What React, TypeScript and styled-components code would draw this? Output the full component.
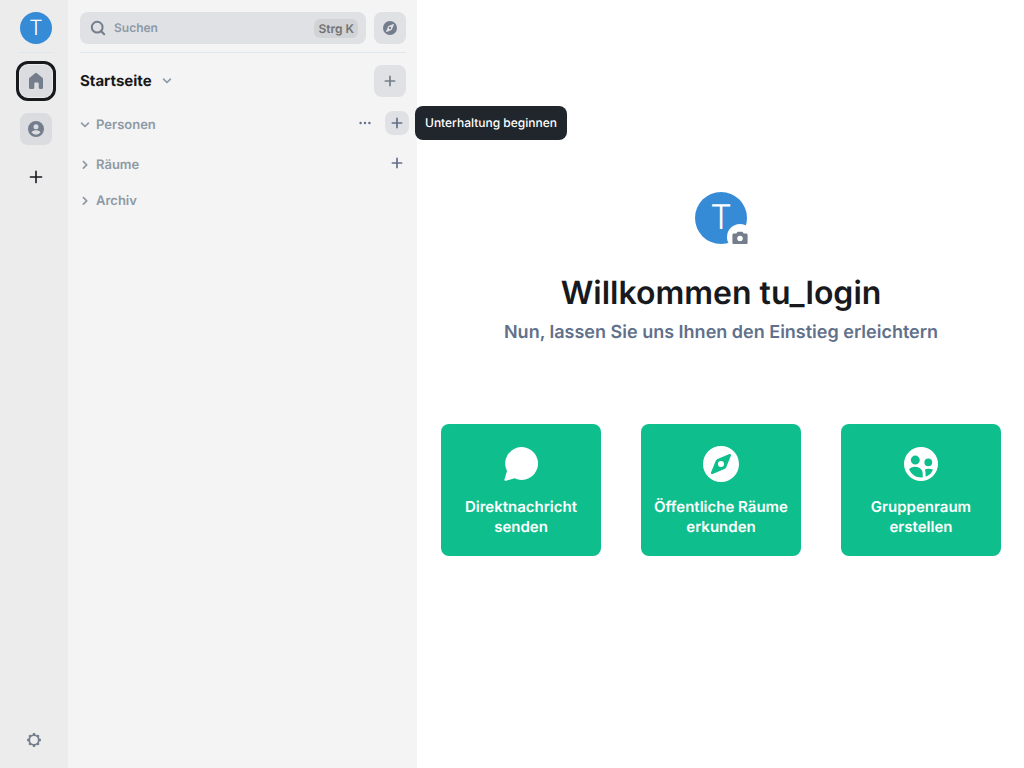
import React from "react";
import styled, { createGlobalStyle, css } from "styled-components";

const GlobalStyle = createGlobalStyle`
  *, *::before, *::after { box-sizing: border-box; }
  body {
    margin: 0;
    background: #ffffff;
    color: #17191c;
    font-family: Inter, "Liberation Sans", sans-serif;
    text-rendering: geometricPrecision;
  }
  button, input { font: inherit; text-rendering: inherit; }
  button { border: 0; padding: 0; background: none; color: inherit; cursor: pointer; }
  svg { display: block; flex: none; }
  h1, h2, h3 { margin: 0; }
`;

const Layout = styled.div`
  display: flex;
  min-height: 100vh;
`;

const Rail = styled.nav`
  display: flex;
  flex: none;
  flex-direction: column;
  align-items: center;
  width: 68px;
  padding: 12px 14px 18px 18px;
  background: #ececec;
`;

const Avatar = styled.span<{ $large?: boolean }>`
  display: flex;
  flex: none;
  align-items: center;
  justify-content: center;
  width: ${(p) => (p.$large ? 52 : 32)}px;
  height: ${(p) => (p.$large ? 52 : 32)}px;
  border-radius: 50%;
  background: #368bd6;
  color: #ffffff;
  font-size: ${(p) => (p.$large ? 34 : 21)}px;
  font-weight: 350;
  line-height: 1;
`;

const UserButton = styled.button`
  border-radius: 50%;
`;

const Divider = styled.hr`
  align-self: stretch;
  flex: none;
  height: 1px;
  margin: 8px 0 12px;
  border: 0;
  background: #e1e7f1;
`;

const Spaces = styled.div`
  display: flex;
  flex: 1;
  flex-direction: column;
  align-items: center;
  gap: 16px;
`;

const SpaceButton = styled.button<{ $active?: boolean; $plain?: boolean }>`
  display: flex;
  align-items: center;
  justify-content: center;
  width: 32px;
  height: 32px;
  border-radius: 8px;
  background: ${(p) => (p.$plain ? "transparent" : "#dadce0")};
  color: ${(p) => (p.$plain ? "#17191c" : "#737d8c")};
  ${(p) =>
    p.$active &&
    css`
      outline: 3px solid #17191c;
      outline-offset: 1px;
    `}
`;

const SettingsButton = styled.button`
  display: flex;
  align-items: center;
  justify-content: center;
  align-self: flex-start;
  width: 32px;
  height: 20px;
  color: #737d8c;
`;

const Panel = styled.aside`
  display: flex;
  flex: none;
  flex-direction: column;
  width: 349px;
  padding: 12px 11px 12px 12px;
  background: #f4f4f4;
`;

const SearchRow = styled.div`
  display: flex;
  gap: 8px;
`;

const SearchBox = styled.label`
  display: flex;
  flex: 1;
  align-items: center;
  gap: 8px;
  min-width: 0;
  height: 32px;
  padding: 0 8px 0 10px;
  border-radius: 8px;
  background: #e0e1e5;
  color: #737d8c;
`;

const SearchInput = styled.input`
  flex: 1;
  min-width: 0;
  padding: 0;
  border: 0;
  outline: 0;
  background: transparent;
  color: #17191c;
  font-size: 12px;
  font-weight: 600;
  line-height: 16px;
  &::placeholder { color: #8d99a5; opacity: 1; }
`;

const Shortcut = styled.kbd`
  padding: 2px 4px 1px;
  border-radius: 6px;
  background: #d1d3d7;
  color: #737373;
  font-family: inherit;
  font-size: 12px;
  font-weight: 600;
  line-height: 16px;
`;

const SquareButton = styled.button`
  display: flex;
  flex: none;
  align-items: center;
  justify-content: center;
  width: 32px;
  height: 32px;
  border-radius: 8px;
  background: #e0e1e5;
  color: #737d8c;
`;

const PanelHeader = styled.header`
  display: flex;
  align-items: center;
  justify-content: space-between;
  margin-bottom: 14px;
`;

const PanelTitle = styled.button`
  display: flex;
  align-items: center;
  gap: 10px;
  font-size: 15px;
  font-weight: 700;
  line-height: 24px;
`;

const Muted = styled.span`
  display: flex;
  color: #8d99a5;
`;

const Sections = styled.div`
  display: flex;
  flex-direction: column;
`;

const SectionRow = styled.div<{ $gap?: number }>`
  display: flex;
  align-items: center;
  height: 24px;
  margin: 0 -3px ${(p) => p.$gap ?? 0}px 0;
`;

const SectionToggle = styled.button`
  display: flex;
  flex: 1;
  align-items: center;
  gap: 6px;
  padding-top: 3px;
  color: #8d99a5;
  font-size: 13px;
  font-weight: 600;
  line-height: 20px;
  text-align: left;
`;

const SectionAction = styled.button<{ $filled?: boolean }>`
  position: relative;
  display: flex;
  align-items: center;
  justify-content: center;
  width: 24px;
  height: 24px;
  margin-left: 8px;
  border-radius: 8px;
  background: ${(p) => (p.$filled ? "#e0e1e5" : "transparent")};
  color: #61708b;
`;

const Tooltip = styled.span`
  position: absolute;
  z-index: 1;
  top: -5px;
  left: 30px;
  padding: 9px 10px;
  border-radius: 8px;
  background: #21262c;
  color: #ffffff;
  font-size: 12px;
  font-weight: 500;
  line-height: 16px;
  white-space: nowrap;
`;

const Main = styled.main`
  display: flex;
  flex: 1;
  flex-direction: column;
  align-items: center;
  justify-content: center;
  min-width: 0;
  padding: 24px 23px 44px 24px;
  text-align: center;
`;

const AvatarUpload = styled.button`
  position: relative;
  margin-bottom: 29px;
  border-radius: 50%;
`;

const CameraBadge = styled.span`
  position: absolute;
  right: -6px;
  bottom: -6px;
  display: flex;
  align-items: center;
  justify-content: center;
  width: 26px;
  height: 26px;
  padding-top: 1px;
  border-radius: 50%;
  background: #ffffff;
  color: #737d8c;
`;

const Heading = styled.h1`
  font-size: 32px;
  font-weight: 600;
  line-height: 40px;
`;

const Subheading = styled.h2`
  margin-top: 8px;
  color: #61708b;
  font-size: 18px;
  font-weight: 600;
  line-height: 24px;
`;

const Actions = styled.div`
  display: flex;
  flex-wrap: wrap;
  justify-content: center;
  gap: 40px;
  margin-top: 79px;
`;

const ActionCard = styled.button`
  display: flex;
  flex-direction: column;
  align-items: center;
  gap: 15px;
  width: 160px;
  min-height: 132px;
  padding: 22px 8px 18px;
  border-radius: 8px;
  background: #0fbe8d;
  color: #ffffff;
  font-size: 15px;
  font-weight: 600;
  line-height: 20px;
`;

const PlusIcon = ({ size = 12, weight = 1.7 }: { size?: number; weight?: number }) => (
  <svg width={size} height={size} viewBox={`0 0 ${size} ${size}`} stroke="currentColor" strokeWidth={weight} strokeLinecap="round" aria-hidden="true">
    <path d={`M${size / 2} 1.4V${size - 1.4}M1.4 ${size / 2}H${size - 1.4}`} />
  </svg>
);

const Chevron = ({ open }: { open?: boolean }) => (
  <svg width="10" height="10" viewBox="0 0 10 10" fill="none" stroke="currentColor" strokeWidth="1.7" strokeLinecap="round" strokeLinejoin="round" aria-hidden="true">
    <path d={open ? "M1.6 3.2 5 6.5 8.4 3.2" : "M3.4 1.5 6.7 4.8 3.4 8.1"} />
  </svg>
);

const SearchIcon = () => (
  <svg width="16" height="16" viewBox="0 0 16 16" fill="none" stroke="currentColor" strokeWidth="2" strokeLinecap="round" aria-hidden="true">
    <circle cx="7.2" cy="7.2" r="5.4" />
    <path d="m11.2 11.2 3 3" />
  </svg>
);

const CompassIcon = ({ size }: { size: number }) => (
  <svg width={size} height={size} viewBox="0 0 36 36" fill="currentColor" aria-hidden="true">
    <path fillRule="evenodd" d="M18 0a18 18 0 1 1 0 36 18 18 0 0 1 0-36ZM14.6 12.9c-.8.3-1.4.9-1.7 1.7L8 26.4c-.4 1 .6 2 1.6 1.6l11.8-4.9c.8-.3 1.4-.9 1.7-1.7L28 9.6c.4-1-.6-2-1.6-1.6l-11.8 4.9Z" />
    <circle cx="18" cy="18" r="3" />
  </svg>
);

const HomeIcon = () => (
  <svg width="16" height="18" viewBox="0 0 16 18" fill="currentColor" aria-hidden="true">
    <path d="M7.1 1.3a1.3 1.3 0 0 1 1.8 0l5.5 4.5c.4.3.6.8.6 1.3v8.6c0 .7-.5 1.2-1.2 1.2h-1.9c-.7 0-1.2-.5-1.2-1.2v-3.9c0-.7-.5-1.2-1.1-1.2H7.4c-.7 0-1.1.5-1.1 1.2v3.9c0 .7-.5 1.2-1.2 1.2H2.2c-.7 0-1.2-.5-1.2-1.2V7.1c0-.5.2-1 .6-1.3l5.5-4.5Z" />
  </svg>
);

const PersonIcon = () => (
  <svg width="16" height="16" viewBox="0 0 16 16" fill="currentColor" aria-hidden="true">
    <path fillRule="evenodd" d="M8 0a8 8 0 1 1 0 16A8 8 0 0 1 8 0Zm0 3.3a2.5 2.5 0 1 0 0 5 2.5 2.5 0 0 0 0-5ZM3.4 11.3a5.6 5.6 0 0 0 9.2 0C11.3 9.9 9.8 9.3 8 9.3s-3.3.6-4.6 2Z" />
  </svg>
);

const GearIcon = () => (
  <svg width="16" height="16" viewBox="0 0 16 16" fill="none" stroke="currentColor" aria-hidden="true">
    <circle cx="8" cy="8" r="4.8" strokeWidth="1.8" />
    <path d="M8 1.1v2M8 12.9v2M1.1 8h2M12.9 8h2M3.2 3.2l1.4 1.4M11.4 11.4l1.4 1.4M3.2 12.8l1.4-1.4M11.4 4.6l1.4-1.4" strokeWidth="2.3" />
  </svg>
);

const DotsIcon = () => (
  <svg width="12" height="4" viewBox="0 0 12 4" fill="currentColor" aria-hidden="true">
    <circle cx="1.6" cy="2" r="1.2" />
    <circle cx="6" cy="2" r="1.2" />
    <circle cx="10.4" cy="2" r="1.2" />
  </svg>
);

const CameraIcon = () => (
  <svg width="16" height="14" viewBox="0 0 16 14" fill="currentColor" aria-hidden="true">
    <path fillRule="evenodd" d="M6 .8h4c.5 0 .8.2 1 .6l.7 1.2h2.5c.8 0 1.4.6 1.4 1.4v7.7c0 .8-.6 1.4-1.4 1.4H1.8c-.8 0-1.4-.6-1.4-1.4V4c0-.8.6-1.4 1.4-1.4h2.5L5 1.4c.2-.4.5-.6 1-.6Zm2 3.9a2.8 2.8 0 1 0 0 5.6 2.8 2.8 0 0 0 0-5.6Z" />
  </svg>
);

const ChatIcon = () => (
  <svg width="36" height="36" viewBox="-1 -1 36 36" fill="currentColor" aria-hidden="true">
    <path d="M17.6.1a16.4 16.4 0 1 1-7 31.2L2 33.7c-1.2.3-1.9-.4-1.5-1.5L3 24.1A16.4 16.4 0 0 1 17.6.1Z" />
  </svg>
);

const GroupIcon = () => (
  <svg width="36" height="36" viewBox="-1 -1 36 36" fill="currentColor" aria-hidden="true">
    <path fillRule="evenodd" d="M17 0a17 17 0 1 1 0 34 17 17 0 0 1 0-34Zm-5.7 8.6a4.5 4.5 0 1 0 0 9 4.5 4.5 0 0 0 0-9Zm13 2.8a3.8 3.8 0 1 0 0 7.8 3.8 3.8 0 0 0 0-7.8ZM5.1 22.2C6.2 20.6 8.5 19.7 11 19.7c4.6 0 7.7 3 7.7 6.7v4C12.4 31 7.3 27.6 5.1 22.2Zm15.8.4c1.7-1 5.7-1 8 0-1.2 3.7-3.5 6-7.3 7.2 0-2.7.1-5-.7-7.2Z" />
  </svg>
);

const cards = [
  { label: "Direktnachricht senden", icon: <ChatIcon /> },
  { label: "Öffentliche Räume erkunden", icon: <CompassIcon size={36} /> },
  { label: "Gruppenraum erstellen", icon: <GroupIcon /> },
];

export default function App() {
  return (
    <>
      <GlobalStyle />
      <Layout>
        <Rail aria-label="Spaces">
          <UserButton aria-label="Benutzermenü">
            <Avatar>T</Avatar>
          </UserButton>
          <Divider />
          <Spaces>
            <SpaceButton $active aria-label="Startseite"><HomeIcon /></SpaceButton>
            <SpaceButton aria-label="Personen"><PersonIcon /></SpaceButton>
            <SpaceButton $plain aria-label="Space erstellen"><PlusIcon size={14} weight={1.6} /></SpaceButton>
          </Spaces>
          <SettingsButton aria-label="Einstellungen"><GearIcon /></SettingsButton>
        </Rail>

        <Panel>
          <SearchRow>
            <SearchBox>
              <SearchIcon />
              <SearchInput type="text" placeholder="Suchen" aria-label="Suchen" />
              <Shortcut>Strg K</Shortcut>
            </SearchBox>
            <SquareButton aria-label="Räume erkunden"><CompassIcon size={14} /></SquareButton>
          </SearchRow>
          <Divider />
          <PanelHeader>
            <PanelTitle>
              Startseite
              <Muted><Chevron open /></Muted>
            </PanelTitle>
            <SquareButton aria-label="Hinzufügen"><PlusIcon /></SquareButton>
          </PanelHeader>
          <Sections>
            <SectionRow $gap={16}>
              <SectionToggle aria-expanded="true"><Chevron open />Personen</SectionToggle>
              <SectionAction aria-label="Optionen"><DotsIcon /></SectionAction>
              <SectionAction $filled aria-label="Unterhaltung beginnen">
                <PlusIcon />
                <Tooltip role="tooltip">Unterhaltung beginnen</Tooltip>
              </SectionAction>
            </SectionRow>
            <SectionRow $gap={12}>
              <SectionToggle aria-expanded="false"><Chevron />Räume</SectionToggle>
              <SectionAction aria-label="Raum hinzufügen"><PlusIcon /></SectionAction>
            </SectionRow>
            <SectionRow>
              <SectionToggle aria-expanded="false"><Chevron />Archiv</SectionToggle>
            </SectionRow>
          </Sections>
        </Panel>

        <Main>
          <AvatarUpload aria-label="Profilbild hinzufügen">
            <Avatar $large>T</Avatar>
            <CameraBadge><CameraIcon /></CameraBadge>
          </AvatarUpload>
          <Heading>Willkommen tu_login</Heading>
          <Subheading>Nun, lassen Sie uns Ihnen den Einstieg erleichtern</Subheading>
          <Actions>
            {cards.map((card) => (
              <ActionCard key={card.label}>
                {card.icon}
                {card.label}
              </ActionCard>
            ))}
          </Actions>
        </Main>
      </Layout>
    </>
  );
}
